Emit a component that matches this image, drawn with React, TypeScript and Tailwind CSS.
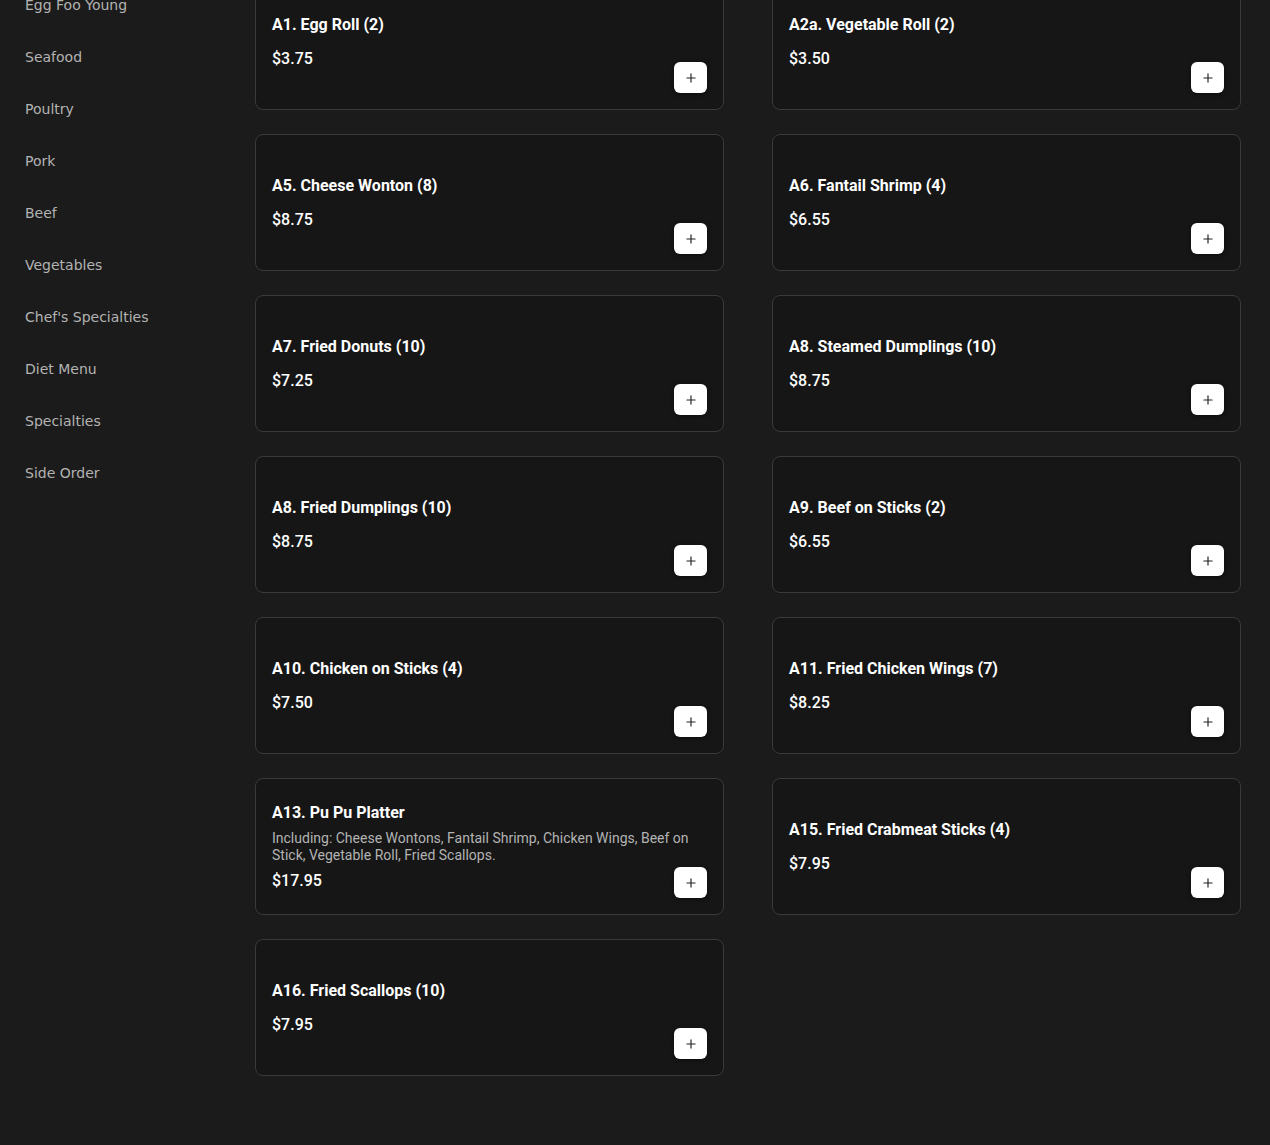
import { Plus } from "lucide-react";

type Item = {
  name: string;
  price: string;
  description?: string;
};

const categories = [
  "Egg Foo Young",
  "Seafood",
  "Poultry",
  "Pork",
  "Beef",
  "Vegetables",
  "Chef's Specialties",
  "Diet Menu",
  "Specialties",
  "Side Order",
];

const items: Item[] = [
  { name: "A1. Egg Roll (2)", price: "$3.75" },
  { name: "A2a. Vegetable Roll (2)", price: "$3.50" },
  { name: "A5. Cheese Wonton (8)", price: "$8.75" },
  { name: "A6. Fantail Shrimp (4)", price: "$6.55" },
  { name: "A7. Fried Donuts (10)", price: "$7.25" },
  { name: "A8. Steamed Dumplings (10)", price: "$8.75" },
  { name: "A8. Fried Dumplings (10)", price: "$8.75" },
  { name: "A9. Beef on Sticks (2)", price: "$6.55" },
  { name: "A10. Chicken on Sticks (4)", price: "$7.50" },
  { name: "A11. Fried Chicken Wings (7)", price: "$8.25" },
  {
    name: "A13. Pu Pu Platter",
    price: "$17.95",
    description:
      "Including: Cheese Wontons, Fantail Shrimp, Chicken Wings, Beef on Stick, Vegetable Roll, Fried Scallops.",
  },
  { name: "A15. Fried Crabmeat Sticks (4)", price: "$7.95" },
  { name: "A16. Fried Scallops (10)", price: "$7.95" },
];

function MenuCard({ item }: { item: Item }) {
  return (
    <article className="relative flex h-[137px] flex-col justify-center rounded-lg border border-[#3a3a3a] bg-[#161616] p-4">
      <h3 className="text-base font-bold leading-6 text-white">{item.name}</h3>
      {item.description && (
        <p className="mt-[5px] text-sm leading-[17px] text-[#b3b3b3]">
          {item.description}
        </p>
      )}
      <p
        className={`text-base font-medium leading-6 text-white ${
          item.description ? "mt-[5px]" : "mt-2.5"
        }`}
      >
        {item.price}
      </p>

      <button
        type="button"
        className="absolute bottom-4 right-4 flex h-[31px] w-[33px] items-center justify-center rounded-md bg-white text-[#222] shadow-[0_1px_4px_rgba(0,0,0,0.5)]"
        aria-label={`Add ${item.name}`}
      >
        <Plus size={14} strokeWidth={2} />
      </button>
    </article>
  );
}

export default function App() {
  return (
    <div className="h-[1145px] overflow-hidden bg-[#1b1b1b] font-['Roboto',sans-serif]">
      <div className="-mt-[27px] flex">
        <aside className="w-[255px] shrink-0 pl-[25px] pt-[6px] font-['DejaVu_Sans',sans-serif]">
          <nav className="flex flex-col">
            {categories.map((category) => (
              <a
                key={category}
                href="#"
                className="py-4 text-sm leading-5 text-[#b3b3b3]"
              >
                {category}
              </a>
            ))}
          </nav>
        </aside>

        <main className="flex-1 pr-[29px]">
          <div className="grid grid-cols-2 gap-x-12 gap-y-6">
            {items.map((item, index) => (
              <MenuCard key={index} item={item} />
            ))}
          </div>
        </main>
      </div>
    </div>
  );
}
